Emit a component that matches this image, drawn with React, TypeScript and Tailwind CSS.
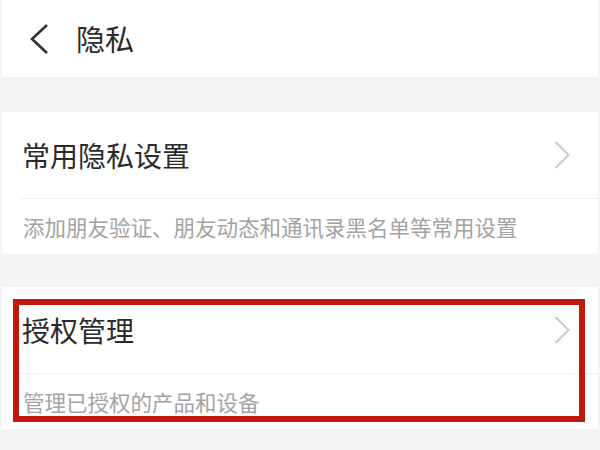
const font = { fontFamily: '"Noto Sans CJK SC", "Noto Sans", sans-serif' };

function ChevronRight() {
  return (
    <svg width="16" height="28" viewBox="0 0 16 28" fill="none" aria-hidden>
      <polyline points="1.5,1 14.5,14 1.5,27" stroke="#c8c8c8" strokeWidth="2" strokeLinejoin="miter" />
    </svg>
  );
}

function Card({ title, desc, highlight }: { title: string; desc: string; highlight?: boolean }) {
  return (
    <div className="relative mx-[2px] bg-white">
      <div className="flex h-[86px] items-center justify-between pl-[20px] pr-[28px]">
        <span className="text-[28px] leading-none text-[#2b2b2b]">{title}</span>
        <ChevronRight />
      </div>
      <div className="ml-[18px] h-px bg-[#f1f1f1]" />
      <div className="flex h-[55px] items-center pl-[21px]">
        <span className="text-[21.5px] leading-none text-[#a3a3a3]">{desc}</span>
      </div>
      {highlight && (
        <div className="pointer-events-none absolute left-[11px] top-[12px] h-[123px] w-[572px] border-[6px] border-[#c1180d]" />
      )}
    </div>
  );
}

export default function App() {
  return (
    <div className="h-[450px] w-[600px] overflow-hidden bg-[#f4f4f4]" style={font}>
      <div className="mx-[2px] flex h-[77px] items-center bg-white">
        <svg className="ml-[26px]" width="22" height="32" viewBox="0 0 22 32" fill="none" aria-hidden>
          <polyline points="19,2 4,16 19,30" stroke="#333333" strokeWidth="2.6" strokeLinejoin="miter" />
        </svg>
        <span className="ml-[26px] text-[29px] leading-none text-[#2b2b2b]">隐私</span>
      </div>
      <div className="h-[35px]" />
      <Card title="常用隐私设置" desc="添加朋友验证、朋友动态和通讯录黑名单等常用设置" />
      <div className="h-[33px]" />
      <Card title="授权管理" desc="管理已授权的产品和设备" highlight />
    </div>
  );
}
